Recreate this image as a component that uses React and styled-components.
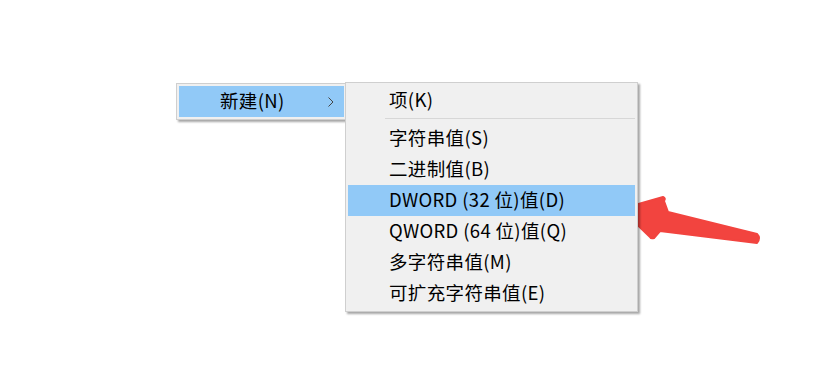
import styled, { createGlobalStyle } from "styled-components";

const GlobalStyle = createGlobalStyle`
  html, body {
    margin: 0;
    padding: 0;
    background: #ffffff;
  }
  body {
    font-family: "Noto Sans CJK SC", "Noto Sans", sans-serif;
  }
`;

const Stage = styled.div`
  position: relative;
  width: 817px;
  height: 368px;
  overflow: hidden;
  background: #fff;
`;

const MenuRow = styled.div`
  display: flex;
  align-items: flex-start;
  padding: 82px 0 0 176px;
`;

const Menu = styled.div`
  background: #f0f0f0;
  border: 1px solid #cfcfcf;
  padding: 2px;
  box-shadow: 2px 2px 2px rgba(0, 0, 0, 0.35);
  margin-top: ${({ $top }) => $top || 0}px;
  margin-left: ${({ $left }) => $left || 0}px;
  width: ${({ $width }) => $width}px;
  box-sizing: border-box;
  position: relative;
  z-index: ${({ $z }) => $z || 0};
`;

const Item = styled.div`
  display: flex;
  align-items: center;
  justify-content: space-between;
  height: 31px;
  padding: 0 10px 0 ${({ $indent }) => $indent}px;
  font-size: 18.5px;
  letter-spacing: 0.35px;
  color: #000;
  background: ${({ $active }) => ($active ? "#91c9f7" : "transparent")};
  white-space: nowrap;
`;

const Label = styled.span`
  line-height: 31px;
  padding-bottom: 3px;
`;

const Chevron = styled.svg`
  display: block;
`;

const Separator = styled.div`
  height: 1px;
  background: #d7d7d7;
  margin: 2px 0 4px 37px;
`;

const Arrow = styled.svg`
  position: absolute;
  left: 0;
  top: 0;
  pointer-events: none;
`;

const subItems = [
  "字符串值(S)",
  "二进制值(B)",
  "DWORD (32 位)值(D)",
  "QWORD (64 位)值(Q)",
  "多字符串值(M)",
  "可扩充字符串值(E)",
];

export default function App() {
  return (
    <Stage>
      <GlobalStyle />
      <MenuRow>
        <Menu $top={1} $width={171} $z={1}>
          <Item $indent={41} $active>
            <Label>新建(N)</Label>
            <Chevron width="6" height="10" viewBox="0 0 6 10">
              <path d="M0.5 0.5 L5 5 L0.5 9.5" fill="none" stroke="#444" strokeWidth="1" />
            </Chevron>
          </Item>
        </Menu>
        <Menu $left={-2} $width={293} $z={2}>
          <Item $indent={41}>
            <Label>项(K)</Label>
          </Item>
          <Separator />
          {subItems.map((label, i) => (
            <Item key={label} $indent={41} $active={i === 2}>
              <Label>{label}</Label>
            </Item>
          ))}
        </Menu>
      </MenuRow>
      <Arrow width="817" height="368" viewBox="0 0 817 368">
        <path
          d="M621 209 L663 197 Q666 198 664 201 L668 212 L757 234 Q761 238 757 243 L660 231 L654 238 Q651 239 650 237 Z"
          fill="#f2443f"
          stroke="#f2443f"
          strokeWidth="2"
          strokeLinejoin="round"
        />
      </Arrow>
    </Stage>
  );
}
